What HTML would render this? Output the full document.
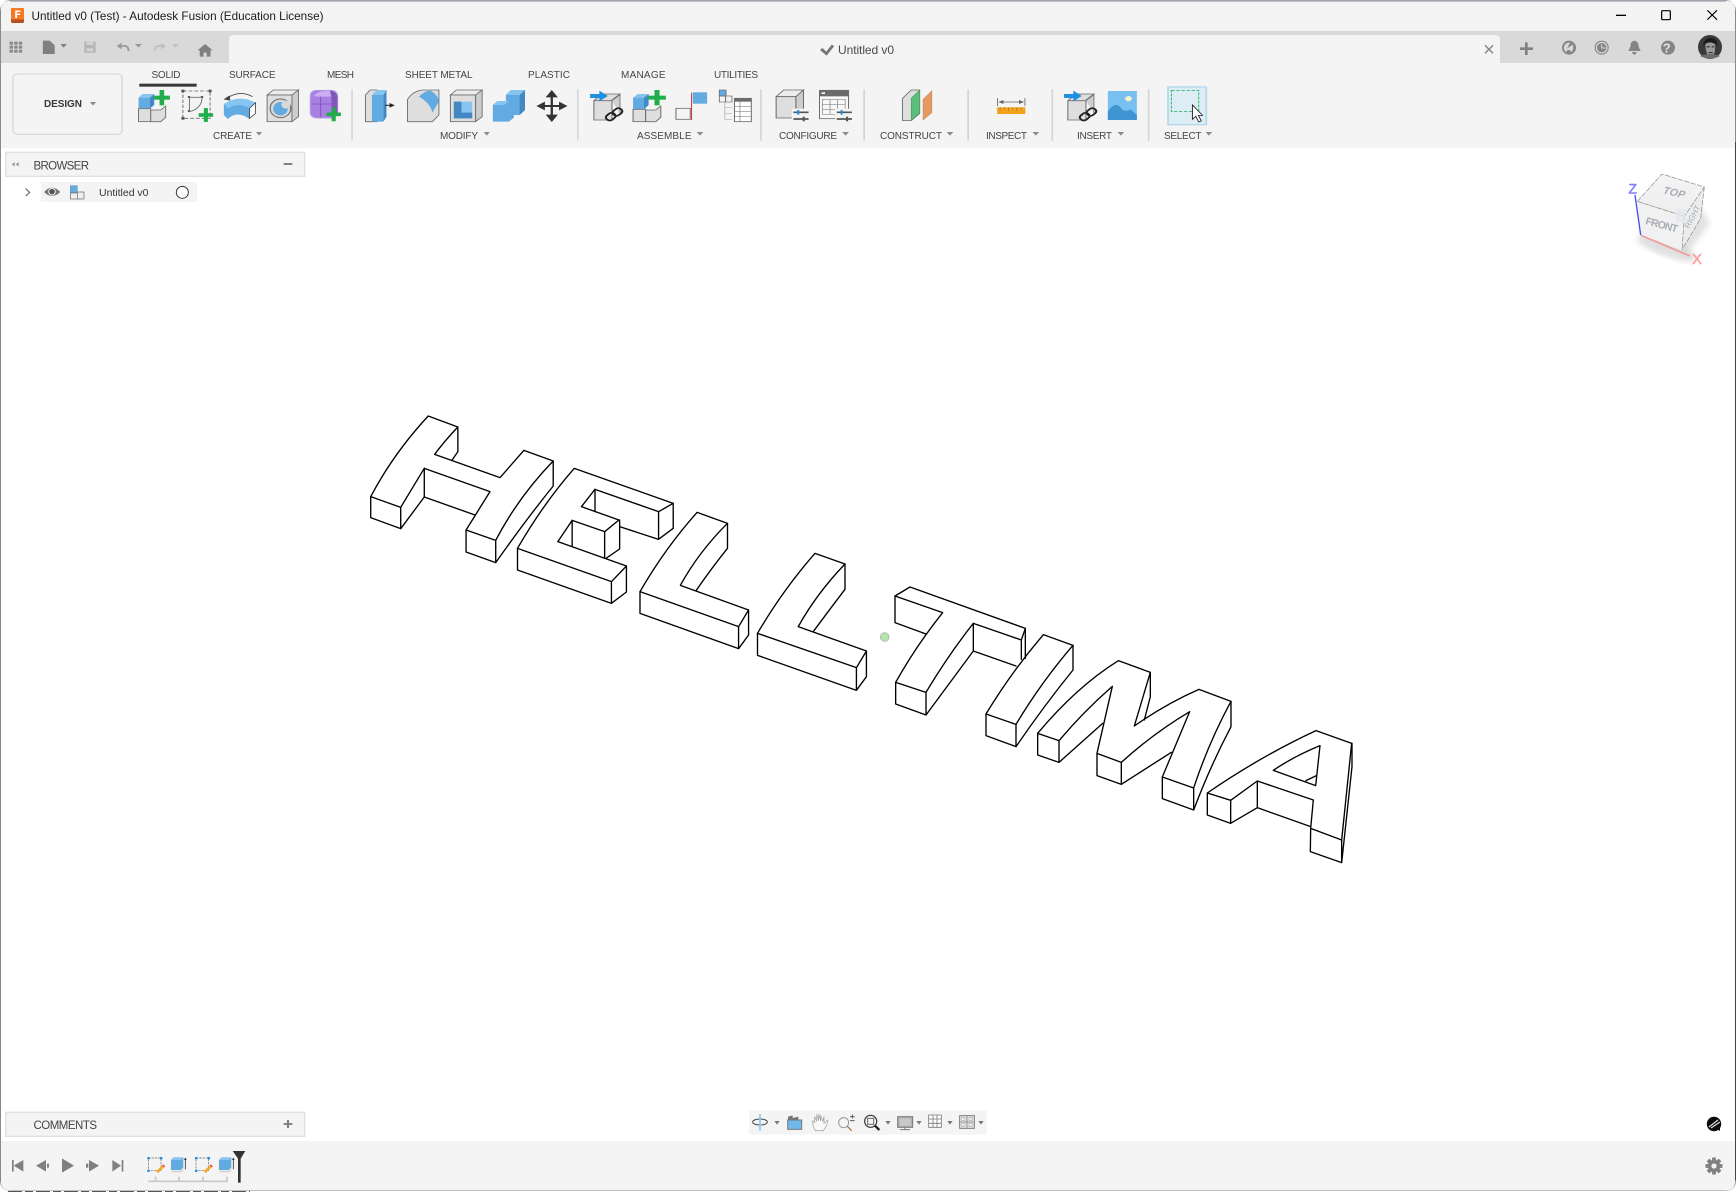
<!DOCTYPE html>
<html lang="en"><head><meta charset="utf-8"><title>Untitled v0 (Test) - Autodesk Fusion (Education License)</title>
<style>
html,body{margin:0;padding:0;background:#fff;width:1736px;height:1192px;overflow:hidden}
svg{display:block;position:absolute;left:0;top:0}
text{font-family:"Liberation Sans",sans-serif;fill:#444}
.m path,.m polyline{fill:none;stroke:#000;stroke-width:1.35;stroke-linejoin:round;stroke-linecap:round;vector-effect:non-scaling-stroke}
.t{font-size:10px}
.b{fill:#62aae2}.bl{fill:#86c4f1}.bd{fill:#4388c3}
.g{fill:#dedede;stroke:#6b6b6b;stroke-width:2.4}
.gr{fill:#1fae4b}
.tri{fill:#8a8a8a}
</style></head><body>
<svg width="1736" height="1192" viewBox="0 0 1736 1192" xmlns="http://www.w3.org/2000/svg">
<defs>
<filter id="blur"><feGaussianBlur stdDeviation="9"/></filter>
<linearGradient id="cubeg" x1="0" y1="0" x2="0" y2="1"><stop offset="0" stop-color="#f4f4f5"/><stop offset="1" stop-color="#eeeeef"/></linearGradient>
<g id="joint">
<path d="M33 302V360H76V300L95 282H52" fill="#dedede" stroke="#6b6b6b" stroke-width="2.4"/>
<path d="M33 302L52 282M33 302H76" fill="none" stroke="#6b6b6b" stroke-width="2.4"/>
<path d="M76 302L95 284V340" fill="#cfcfcf" stroke="#6b6b6b" stroke-width="2"/>
<path d="M24 282H46V272L66 288L46 304V294H24Z" fill="#1f8fe0"/>
<g fill="none" stroke="#222" stroke-width="5"><rect x="64" y="338" width="18" height="24" rx="8" transform="rotate(45 73 350)"/><rect x="80" y="324" width="18" height="24" rx="8" transform="rotate(45 89 336)"/></g>
</g>
<g id="plusg"><rect x="-21" y="-6" width="42" height="12" class="gr"/><rect x="-6" y="-23" width="12" height="46" class="gr"/></g>
<g id="sliders"><path d="M0 0H36M0 20H36" stroke="#555" stroke-width="5" fill="none"/><rect x="9" y="-7" width="5" height="14" fill="#1f8fe0"/><rect x="22" y="13" width="5" height="14" fill="#555"/></g>
</defs>

<!-- window base -->
<rect width="1736" height="1192" fill="#fff"/>
<path d="M0 12Q0 0 12 0H1724Q1736 0 1736 12V1180Q1736 1191 1724 1191H12Q0 1191 0 1180Z" fill="#8a8a8a"/>
<path d="M1735 142H1736V1180H1735Z" fill="#444"/>
<path d="M10 1H1726Q1735 1 1735 9V1181Q1735 1190 1726 1190H10Q1 1190 1 1181V9Q1 1 10 1Z" fill="#fff"/>
<path d="M1 31V10Q1 2 10 2H1726Q1735 2 1735 10V31Z" fill="#f3f3f3"/>
<path d="M10 1H1726" stroke="#a9a9b3" stroke-width="1.4"/>
<rect x="1" y="31" width="1734" height="32" fill="#d9d9d9"/>
<path d="M229 63V40Q229 35 234 35H1495Q1500 35 1500 40V63Z" fill="#f4f4f4"/>
<rect x="1" y="63" width="1734" height="85" fill="#f4f4f4"/>
<path d="M1 1141H1735V1181Q1735 1190.500 1726 1190.500H10Q1 1190.500 1 1181Z" fill="#f4f4f4"/>
<path d="M8 1191.5H250" stroke="#555" stroke-width="1" stroke-dasharray="14 3 8 3"/>

<!-- title bar -->
<rect x="11" y="8" width="13" height="15" rx="1.5" fill="#b4501e"/>
<path d="M11 19.5V9.5Q11 8 12.5 8H22.5Q24 8 24 9.5V19.5Z" fill="#f47b24"/>
<path d="M15.2 18V10.5H20.4V12H17V13.6H20V15H17V18Z" fill="#fff"/>
<text x="31.5" y="20" font-size="12" textLength="292" lengthAdjust="spacingAndGlyphs" style="fill:#1c1c1c">Untitled v0 (Test) - Autodesk Fusion (Education License)</text>
<g transform="translate(1440,0) scale(.33333)" fill="none" stroke="#000">
<path d="M528 46H558" stroke-width="4"/>
<rect x="665" y="32" width="26" height="27" rx="3" stroke-width="3.6"/>
<path d="M802 31L831 59M831 31L802 59" stroke-width="3.4"/>
</g>

<!-- tab row + qat (zoom-1 space) -->
<g transform="scale(.38265,.33333)">
<g fill="#8a8a8a"><rect x="25" y="125" width="9" height="9"/><rect x="37" y="125" width="9" height="9"/><rect x="49" y="125" width="9" height="9"/><rect x="25" y="137" width="9" height="9"/><rect x="37" y="137" width="9" height="9"/><rect x="49" y="137" width="9" height="9"/><rect x="25" y="149" width="9" height="9"/><rect x="37" y="149" width="9" height="9"/><rect x="49" y="149" width="9" height="9"/></g>
<path d="M112 122H130L143 136V162H112Z" fill="#808080"/><path d="M158 132H175L166 143Z" fill="#808080"/>
<path d="M220 125H250V158H220Z" fill="#b5b5b5"/><rect x="226" y="125" width="18" height="10" fill="#d2d2d2"/><rect x="226" y="145" width="18" height="9" fill="#d2d2d2"/>
<path d="M312 138H326Q336 138 336 153" fill="none" stroke="#9a9a9a" stroke-width="5"/><path d="M305 138L318 128V148Z" fill="#9a9a9a"/><path d="M353 132H371L362 143Z" fill="#9a9a9a"/>
<path d="M428 138H414Q404 138 404 153" fill="none" stroke="#c0c0c0" stroke-width="5"/><path d="M434 138L421 128V148Z" fill="#c0c0c0"/><path d="M449 132H467L458 143Z" fill="#c0c0c0"/>
<path d="M536 132L556 151H550V170H540V158H532V170H522V151H516Z" fill="#808080"/>

<!-- DESIGN -->
<rect x="34" y="222" width="285" height="181" rx="12" fill="#f4f4f4" stroke="#d9d9d9" stroke-width="4"/>
<path d="M235 306H251L243 317Z" class="tri"/>

<!-- create icons -->
<path d="M362 293L372 282H403L392 293Z" class="bl"/><rect x="362" y="293" width="30" height="32" class="b"/><path d="M392 293L403 282V315L392 325Z" class="bd"/>
<rect x="362" y="326" width="32" height="39" class="g"/><path d="M394 330H420L433 318V352L420 365H394Z" class="g"/>
<use href="#plusg" transform="translate(423,293)"/>

<rect x="478" y="273" width="71" height="82" fill="none" stroke="#6b6b6b" stroke-width="2.5" stroke-dasharray="10 5"/>
<g fill="#555"><rect x="474" y="269" width="8" height="8"/><rect x="545" y="269" width="8" height="8"/><rect x="474" y="351" width="8" height="8"/><rect x="491" y="288" width="6" height="6"/><rect x="525" y="288" width="6" height="6"/><rect x="491" y="330" width="6" height="6"/></g>
<path d="M495 292H528Q528 325 495 335Z" fill="none" stroke="#6b6b6b" stroke-width="2.5"/>
<use href="#plusg" transform="translate(538,345) scale(.9)"/>

<path d="M592 296Q625 268 660 290" fill="none" stroke="#444" stroke-width="2.4"/><path d="M584 298L600 286L602 302Z" fill="#444"/>
<path d="M585 312Q626 285 652 322V357Q620 330 595 357L585 345Z" class="b"/>
<path d="M585 312Q625 282 668 308L652 325Q625 305 595 325Z" class="bl"/>
<path d="M652 325L668 308V340L652 355Z" fill="#fff" stroke="#333" stroke-width="2"/>

<path d="M698 285L714 270H780L763 285Z" fill="#ececec" stroke="#6b6b6b" stroke-width="2.4"/>
<rect x="698" y="285" width="65" height="80" class="g"/>
<path d="M763 285L780 270V350L763 365Z" fill="#cdcdcd" stroke="#6b6b6b" stroke-width="2.4"/>
<ellipse cx="733" cy="325" rx="27" ry="28" fill="#d8d8d8" stroke="#6b6b6b" stroke-width="3"/><ellipse cx="733" cy="326" rx="19" ry="20" class="b"/><circle cx="747" cy="314" r="12" fill="#d8d8d8"/>

<rect x="811" y="271" width="71" height="83" rx="16" fill="#a880e2" stroke="#b79ae6" stroke-width="3"/>
<path d="M862 272Q882 275 882 295V340L866 345V290Z" fill="#8058bc"/>
<path d="M812 312H866M838 288V352" stroke="#8053c0" stroke-width="2.5" fill="none"/>
<path d="M820 288Q830 272 862 272L866 290H830Z" fill="#c9aef0"/>
<use href="#plusg" transform="translate(872,343) scale(.9)"/>

<!-- modify icons -->
<path d="M955 285L967 270H985V365H955Z" fill="#dedede" stroke="#6b6b6b" stroke-width="2.4"/>
<path d="M972 285L985 270H1010L1002 285Z" class="bl"/><rect x="972" y="285" width="30" height="80" class="b"/><path d="M1002 285L1010 270V350L1002 365Z" class="bd"/>
<path d="M1006 316H1022" stroke="#222" stroke-width="3"/><path d="M1032 316L1018 309V323Z" fill="#222"/>

<path d="M1065 298Q1080 272 1105 270H1147V345L1130 365H1065Z" fill="#dedede" stroke="#6b6b6b" stroke-width="2.4"/>
<path d="M1095 290Q1110 272 1125 272Q1145 285 1147 305L1130 338Q1125 310 1095 290Z" class="b"/>

<path d="M1177 285L1193 270H1260L1243 285Z" fill="#ececec" stroke="#6b6b6b" stroke-width="2.4"/>
<rect x="1177" y="285" width="66" height="80" class="g"/><path d="M1243 285L1260 270V350L1243 365Z" fill="#cdcdcd" stroke="#6b6b6b" stroke-width="2.4"/>
<rect x="1186" y="305" width="48" height="50" class="bl"/><path d="M1186 305H1206V338H1234V355H1186Z" class="bd"/>

<path d="M1288 315L1300 303H1322V285L1335 270H1372V330L1358 345H1343V353L1330 365H1288Z" class="b"/>
<path d="M1322 285L1335 270H1372L1358 285Z M1288 315L1300 303H1330L1318 315Z" class="bl"/>
<path d="M1358 285L1372 270V330L1358 345Z" class="bd"/>

<path d="M1442 285V350M1412 318H1472" stroke="#333" stroke-width="6" fill="none"/>
<path d="M1442 270L1458 292H1426Z M1442 366L1458 344H1426Z M1402 318L1424 305V331Z M1483 318L1461 305V331Z" fill="#333"/>

<!-- underline + tab + panel triangles -->
<rect x="364" y="251" width="150" height="9" fill="#383838"/>
<path d="M669 396H685L677 407Z M1264 396H1280L1272 407Z" class="tri"/>

<!-- seps -->
<rect x="918" y="268" width="4" height="154" fill="#d4d4d4"/><rect x="1508" y="268" width="4" height="154" fill="#d4d4d4"/>
</g>

<!-- zoom-2 space -->
<g transform="translate(580,0) scale(.42092,.33333)">
<use href="#joint"/>
<path d="M126 293L137 282H163L152 293Z" class="bl"/><rect x="126" y="293" width="26" height="35" class="b"/><path d="M152 293L163 282V315L152 328Z" class="bd"/>
<rect x="126" y="328" width="30" height="37" class="g"/><path d="M156 330H180L192 318V352L180 365H156Z" class="g"/>
<use href="#plusg" transform="translate(183,293)"/>

<rect x="228" y="325" width="34" height="33" fill="#f4f4f4" stroke="#6b6b6b" stroke-width="2.4"/>
<path d="M265 278V360" stroke="#d43a3a" stroke-width="2.5"/>
<rect x="268" y="277" width="34" height="34" class="b"/>

<rect x="331" y="270" width="16" height="18" class="b" stroke="#6b6b6b" stroke-width="2"/>
<rect x="331" y="288" width="15" height="18" fill="none" stroke="#6b6b6b" stroke-width="2"/><rect x="346" y="288" width="15" height="18" fill="none" stroke="#6b6b6b" stroke-width="2"/>
<path d="M344 306V358M344 322H361M344 340H361M344 358H361" stroke="#b0b0b0" stroke-width="2" fill="none"/>
<rect x="367" y="295" width="40" height="70" fill="#fff" stroke="#6b6b6b" stroke-width="2.4"/><rect x="367" y="295" width="40" height="10" fill="#6b6b6b"/>
<path d="M367 320H407M367 335H407M367 350H407M380 305V365" stroke="#888" stroke-width="1.8" fill="none"/>

<path d="M466 290L484 270H531L513 290Z" fill="#ececec" stroke="#6b6b6b" stroke-width="2.4"/><rect x="466" y="290" width="47" height="64" class="g"/><path d="M513 290L531 270V336L513 354Z" fill="#cdcdcd" stroke="#6b6b6b" stroke-width="2.4"/>
<rect x="503" y="326" width="42" height="40" fill="#f4f4f4"/>
<use href="#sliders" transform="translate(507,337)"/>

<rect x="569" y="271" width="69" height="85" fill="#f8f8f8" stroke="#6b6b6b" stroke-width="2.4"/><rect x="569" y="271" width="69" height="18" fill="#6b6b6b"/><rect x="574" y="277" width="8" height="5" fill="#fff"/>
<path d="M576 298H630V343H576ZM576 313H630M576 328H630M594 298V343M612 298V343" stroke="#888" stroke-width="1.8" fill="none"/>
<rect x="606" y="326" width="42" height="40" fill="#f4f4f4"/>
<use href="#sliders" transform="translate(610,337)"/>

<path d="M766 295L787 270H807V340L787 362H766Z" fill="#dedede" stroke="#6b6b6b" stroke-width="2.2"/>
<path d="M787 295L807 270V338L787 362Z" fill="#5cbd7c" stroke="#3d9a5c" stroke-width="1.5"/>
<path d="M815 298L836 272V338L815 360Z" fill="#e39a63" stroke="#c87e48" stroke-width="1.2"/>

<path d="M992 294V318M1057 294V318" stroke="#666" stroke-width="2"/><path d="M996 306H1053" stroke="#666" stroke-width="2"/><path d="M994 306L1006 300V312Z M1055 306L1043 300V312Z" fill="#666"/>
<rect x="991" y="322" width="67" height="20" fill="#f2a31c"/><path d="M998 322V332M1008 322V329M1018 322V332M1028 322V329M1038 322V332M1048 322V329" stroke="#a06a10" stroke-width="1.6"/>

<use href="#joint" transform="translate(1126,0)"/>

<rect x="1254" y="273" width="69" height="87" fill="#78c0f2"/><circle cx="1303" cy="296" r="8" fill="#f4f2c8"/>
<path d="M1254 335Q1272 300 1286 325Q1296 338 1308 328L1323 345V360H1254Z" fill="#3f95d1"/>

<rect x="1397" y="261" width="91" height="113" fill="#dcedf6" stroke="#b3d8ec" stroke-width="4"/>
<rect x="1405" y="271" width="65" height="64" fill="none" stroke="#1faf55" stroke-width="2.2" stroke-dasharray="8 4"/>
<path d="M1455 315V358L1463 349L1470 366L1476 363L1469 346H1479Z" fill="#fff" stroke="#222" stroke-width="2.2"/>

<path d="M277 396H293L285 407Z M623 396H639L631 407Z M871 396H887L879 407Z M1075 396H1091L1083 407Z M1277 396H1293L1285 407Z M1486 396H1502L1494 407Z" class="tri"/>
<path d="M570 150L576 144L585 155L598 134L604 138L586 167Z" fill="#777"/>
<g fill="#d4d4d4"><rect x="428" y="268" width="4" height="154"/><rect x="673" y="268" width="4" height="154"/><rect x="920" y="268" width="4" height="154"/><rect x="1120" y="268" width="4" height="154"/><rect x="1349" y="268" width="4" height="154"/></g>
</g>

<!-- right of tab row, viewcube (zoom-3 space) -->
<g transform="translate(1440,0) scale(.33333)">
<path d="M135 136L159 160M159 136L135 160" stroke="#8a8a8a" stroke-width="4.5" fill="none"/>
<path d="M259 127V165M240 146H279" stroke="#808080" stroke-width="8" fill="none"/>
<circle cx="387" cy="143" r="21" fill="#858585"/><path d="M372 147A16 16 0 0 1 390 128L381 146L398 134Q404 148 392 158Q394 150 386 150Q378 150 380 158Q374 154 372 147Z" fill="#d9d9d9"/>
<circle cx="485" cy="143" r="19.5" fill="none" stroke="#858585" stroke-width="3.5"/><circle cx="485" cy="143" r="14" fill="#858585"/><path d="M485 133V144H496" stroke="#d9d9d9" stroke-width="3" fill="none"/>
<path d="M583 122Q596 124 596 140L602 153H565L571 140Q571 124 583 122ZM576 156H590Q588 164 583 164Q578 164 576 156Z" fill="#858585"/>
<circle cx="684" cy="143" r="21" fill="#858585"/>
<circle cx="810" cy="141" r="36" fill="#3a3a3a"/>
<path d="M796 132Q812 122 826 134L824 158Q816 170 804 166Q796 152 796 132Z" fill="#9a9a9a"/>
<path d="M790 140Q790 116 812 114Q834 116 832 140L826 130Q810 122 796 130Z" fill="#1a1a1a"/>
<path d="M800 140L809 141M815 141L823 140M806 158H818" stroke="#222" stroke-width="3"/>
<path d="M780 168Q810 156 840 168Q812 184 780 168Z" fill="#6d6d6d"/>

<ellipse cx="680" cy="745" rx="95" ry="24" fill="#b5b5b5" opacity=".42" filter="url(#blur)" transform="rotate(20 680 745)"/>
<path d="M775 610L810 670L735 770L725 740Z" fill="#b5b5b5" opacity=".4" filter="url(#blur)"/>
<path d="M592 604L666 522L793 561L733 649Z" fill="url(#cubeg)"/>
<path d="M592 604L733 649L726 750L602 705Z" fill="#f1f1f2"/>
<path d="M733 649L793 561L782 655L726 750Z" fill="#ececed"/>
<path d="M592 604L666 522L793 561L733 649ZM592 604L733 649M733 649L726 750M793 561L782 655L726 750" fill="none" stroke="#888" stroke-width="2" stroke-dasharray="16 4"/>
<rect x="706" y="626" width="30" height="42" fill="#e4e8ee" opacity=".8"/>
<path d="M585 585L602 705" stroke="#4a4af0" stroke-width="4"/>
<path d="M603 706L750 768" stroke="#f09a9a" stroke-width="5"/>
</g>
<text transform="translate(1662,193) rotate(14) skewX(-14)" font-size="10.5" font-weight="bold" textLength="22" style="fill:#a8acb4">TOP</text>
<text transform="translate(1645,224) rotate(15)" font-size="10.5" font-weight="bold" textLength="33" style="fill:#a8acb4">FRONT</text>
<text transform="translate(1689,229) rotate(-62)" font-size="8" style="fill:#a8acb4">RIGHT</text>
<text x="1628.500" y="193.500" font-size="14" style="fill:#8080ff" stroke="#8080ff" stroke-width=".5">Z</text>
<text x="1692" y="264" font-size="15" style="fill:#ff9a9a" stroke="#ff9a9a" stroke-width=".4">X</text>
<text x="1662.700" y="52.500" font-size="13" font-weight="bold" style="fill:#e4e4e4">?</text>

<!-- text: tabs -->
<text class="t" x="151.5" y="78" textLength="29">SOLID</text>
<text class="t" x="229" y="78" textLength="46.5">SURFACE</text>
<text class="t" x="327" y="78" textLength="27">MESH</text>
<text class="t" x="405" y="78" textLength="67.5">SHEET METAL</text>
<text class="t" x="528" y="78" textLength="42">PLASTIC</text>
<text class="t" x="621" y="78" textLength="44.5">MANAGE</text>
<text class="t" x="714" y="78" textLength="44">UTILITIES</text>
<text x="44" y="107" font-size="10" font-weight="bold" textLength="38" style="fill:#3a3a3a">DESIGN</text>
<text class="t" x="213" y="139" textLength="39">CREATE</text>
<text class="t" x="440" y="139" textLength="38">MODIFY</text>
<text class="t" x="637" y="139" textLength="54.5">ASSEMBLE</text>
<text class="t" x="779" y="139" textLength="58">CONFIGURE</text>
<text class="t" x="880" y="139" textLength="62">CONSTRUCT</text>
<text class="t" x="986" y="139" textLength="41">INSPECT</text>
<text class="t" x="1077" y="139" textLength="35">INSERT</text>
<text class="t" x="1164" y="139" textLength="37.5">SELECT</text>
<text x="838" y="54" font-size="12" textLength="56" style="fill:#4a4a4a">Untitled v0</text>

<!-- browser -->
<g transform="translate(0,140) scale(.33333)">
<rect x="17" y="37" width="897" height="72" fill="#f4f4f4" stroke="#e0e0e0" stroke-width="4"/>
<path d="M44 66V80L35 73Z M56 66V80L47 73Z" fill="#9a9a9a"/>
<rect x="851" y="69" width="26" height="6" fill="#808080"/>
<rect x="123" y="126" width="468" height="60" fill="#f4f4f4"/>
<path d="M77 146L89 157L77 168" fill="none" stroke="#555" stroke-width="3"/>
<path d="M132 156Q156 130 181 156Q156 180 132 156Z" fill="#777"/><circle cx="156" cy="155" r="10" fill="#555" stroke="#f4f4f4" stroke-width="3"/>
<rect x="211" y="137" width="21" height="22" class="b" stroke="#5a8fb8" stroke-width="1.5"/>
<rect x="211" y="159" width="21" height="18" fill="#eee" stroke="#666" stroke-width="2"/>
<rect x="232" y="156" width="20" height="21" fill="#eee" stroke="#666" stroke-width="2"/>
<circle cx="547" cy="157" r="18" fill="#fff" stroke="#333" stroke-width="3"/>
</g>
<text x="33.5" y="169.500" font-size="11.5" textLength="55.5" style="fill:#444">BROWSER</text>
<text x="99" y="196" font-size="10.5" textLength="49.5" style="fill:#333">Untitled v0</text>

<!-- comments + timeline -->
<g transform="translate(0,1100) scale(.33333)">
<rect x="17" y="37" width="897" height="72" fill="#f4f4f4" stroke="#e0e0e0" stroke-width="4"/>
<path d="M851 69H877V75H851ZM861 60H867V84H861Z" fill="#808080"/>
<g fill="#808080">
<rect x="36" y="180" width="5" height="35"/><path d="M70 180V215L41 197Z"/>
<path d="M138 180V215L108 197Z"/><rect x="141" y="191" width="6" height="12"/>
<path d="M186 175L222 197L186 218Z"/>
<rect x="258" y="191" width="7" height="12"/><path d="M267 180V215L297 197Z"/>
<path d="M337 180V215L363 197Z"/><rect x="365" y="180" width="5" height="35"/>
</g>
<g id="tsk">
<rect x="445" y="174" width="38" height="38" fill="none" stroke="#666" stroke-width="2" stroke-dasharray="7 3"/>
<g fill="#1f8fe0"><rect x="442" y="171" width="7" height="7"/><rect x="480" y="171" width="7" height="7"/><rect x="442" y="209" width="7" height="7"/></g>
<path d="M468 214L486 196L492 202L474 219Z" fill="#f5a623"/><path d="M486 196L490 193L496 199L492 202Z" fill="#ef4a5a"/>
</g>
<use href="#tsk" transform="translate(143,0)"/>
<g id="tex">
<path d="M513 180L520 172H550V202L543 210H513Z" class="b"/><path d="M513 180L520 172H550L543 180Z" class="bl"/><path d="M514 212H544L550 205V212L544 217H514Z" fill="#d2d2d2"/>
<path d="M556 208V176" stroke="#333" stroke-width="2.5"/><path d="M556 172L560 180H552Z" fill="#333"/>
</g>
<use href="#tex" transform="translate(144,0)"/>
<path d="M445 244H683M467 230V246M537 230V246M609 230V246M681 230V246" stroke="#c8c8c8" stroke-width="5" fill="none"/>
<path d="M698 153H736L722 176V248H714V176Z" fill="#333"/>
</g>
<text x="33.500" y="1129" font-size="11.5" textLength="63.500" style="fill:#444">COMMENTS</text>

<!-- nav bar -->
<g transform="translate(730,1100) scale(.33333)">
<rect x="57" y="32" width="713" height="72" fill="#f4f4f4"/>
<ellipse cx="90" cy="66" rx="22" ry="9" fill="none" stroke="#444" stroke-width="3"/>
<path d="M90 42V92" stroke="#8cc8f0" stroke-width="5"/>
<path d="M133 63H149L141 74Z M466 63H482L474 74Z M559 63H575L567 74Z M652 63H668L660 74Z M745 63H761L753 74Z" fill="#777"/>
<path d="M174 62V50L188 46V54L205 50V60Z" fill="#777"/><rect x="173" y="60" width="42" height="28" fill="#6fb9ec" stroke="#777" stroke-width="3"/>
<path d="M256 92Q246 72 248 62L254 68V50L260 64V44L266 62V42L272 62V46L278 64L282 50V70L294 60Q292 76 280 92Z" fill="#f8f8f8" stroke="#aaa" stroke-width="2.4" stroke-linejoin="round"/>
<circle cx="341" cy="68" r="15" fill="#f4f4f4" stroke="#999" stroke-width="3"/><path d="M352 79L365 92" stroke="#a07840" stroke-width="4"/><path d="M360 50H374M367 43V56M360 62H374" stroke="#444" stroke-width="2.4" fill="none"/>
<circle cx="422" cy="64" r="18" fill="#f4f4f4" stroke="#333" stroke-width="3.5"/><rect x="413" y="55" width="18" height="18" fill="none" stroke="#666" stroke-width="3"/><path d="M435 77L448 90" stroke="#222" stroke-width="7"/>
<rect x="503" y="50" width="45" height="32" fill="#b0b0b0" stroke="#777" stroke-width="3"/><rect x="509" y="55" width="33" height="22" fill="#c8c8c8"/><path d="M525 82V88M510 89H540" stroke="#777" stroke-width="3"/>
<path d="M596 45H634V82H596ZM596 57H634M596 70H634M609 45V82M621 45V82" fill="#fff" stroke="#777" stroke-width="2.4"/>
<rect x="689" y="47" width="44" height="38" fill="#eee" stroke="#777" stroke-width="3"/><path d="M689 66H733M711 47V85" stroke="#777" stroke-width="2.4"/><g fill="none" stroke="#aaa" stroke-width="2"><rect x="695" y="52" width="10" height="9"/><rect x="717" y="52" width="10" height="9"/><rect x="695" y="71" width="10" height="9"/><rect x="717" y="71" width="10" height="9"/></g>
</g>

<!-- model -->
<g class="m" transform="translate(340,400) scale(.35714,.33333)">
<!-- H -->
<path d="M86 290Q150 160 247 48L330 81Q295 120 265 163L448 233L515 151L597 183Q500 290 436 421L353 390L420 275L236 205L170 322Z"/>
<path d="M86 290V353L170 386V322M170 386L236 291V205M236 291L378 345M353 390V456L436 488V421M436 488Q520 360 597 258V183M330 81V155L314 180"/>
<!-- E -->
<path d="M497 445Q570 310 656 205L933 310L892 335L714 268L676 320L781 360L741 395L650 361L610 425L802 498L760 545Z"/>
<path d="M497 445V510L760 610V545M760 610L802 576V498M892 335V418L933 385V310M892 418L783 380M714 268V335M650 361V438M741 395V475M745 475L783 447V360"/>
<!-- L -->
<path d="M840 575Q910 445 1000 337L1085 370Q1005 455 953 556L1144 630L1116 680Z"/>
<path d="M840 575V640L1116 746V680M1116 746L1144 705V630M1085 370V445Q1040 505 997 572"/>
<!-- L -->
<path d="M1169 700Q1240 570 1330 460L1414 492Q1335 580 1283 680L1474 753L1446 803Z"/>
<path d="M1169 700V766L1446 871V803M1446 871L1474 830V753M1414 492V568Q1370 630 1325 695"/>
</g>
<g class="m" transform="translate(860,570) scale(.33333)">
<!-- T -->
<path d="M105 78L150 51L496 175L484 210L340 160Q265 255 198 367L107 337Q170 225 248 128Z"/>
<path d="M105 78V158L198 192M107 337V402L198 435V367M198 435L340 243V160M340 243L468 288M496 175V265M484 210V268"/>
<!-- I -->
<path d="M378 432Q455 305 550 194L639 226Q545 335 468 463Z"/>
<path d="M378 432V497L468 530V463M468 530Q550 410 639 300V226"/>
<!-- M -->
<path d="M533 490Q650 350 775 272L871 307L823 468Q920 400 1017 358L1113 394Q1045 520 1001 654L907 621L989 425Q880 490 784 577L711 550L757 349Q670 425 597 512Z"/>
<path d="M533 490V555L597 577V512M597 577L728 460M711 550V617L784 643V577M784 643L934 547M907 621V686L1001 720V654M1001 720Q1050 590 1113 470V394M871 307V380L853 450"/>
<!-- A -->
<path d="M1042 669Q1200 560 1368 482L1475 520L1445 810L1352 775L1360 690L1192 633L1112 691Z"/>
<path d="M1380 527Q1300 560 1240 601L1367 647ZM1338 632L1369 617"/>
<path d="M1042 669V735L1112 760V691M1112 760L1192 713V633M1192 713L1352 770M1352 775L1351 845L1445 878V810M1445 878L1476 590V520"/>
</g>
<circle cx="884.7" cy="637" r="4.4" fill="#b8e2b0" stroke="#a8b8a8" stroke-width=".8"/>

<!-- badge + gear -->
<circle cx="1714" cy="1124" r="7.2" fill="#0a0a0a"/><path d="M1709 1127L1718 1120M1711 1128L1720 1122" stroke="#ddd" stroke-width="1.2"/><path d="M1717 1129L1720 1131V1126Z" fill="#0a0a0a"/>
<g transform="translate(1714,1166)" fill="#808080">
<circle r="6.2"/>
<g><rect x="-1.9" y="-8.5" width="3.8" height="17"/><rect x="-1.9" y="-8.5" width="3.8" height="17" transform="rotate(45)"/><rect x="-1.9" y="-8.5" width="3.8" height="17" transform="rotate(90)"/><rect x="-1.9" y="-8.5" width="3.8" height="17" transform="rotate(135)"/></g>
<circle r="2.6" fill="#f4f4f4"/>
</g>
</svg>
</body></html>
